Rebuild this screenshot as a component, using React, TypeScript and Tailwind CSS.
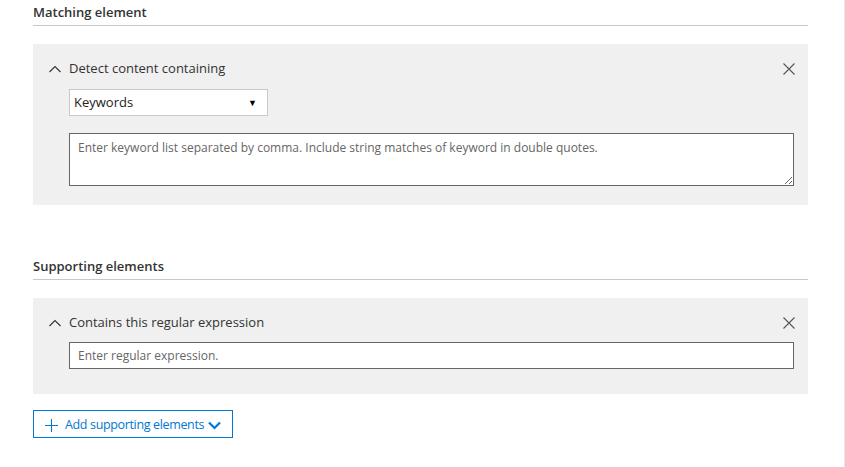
import React from "react";

function ChevronUp() {
  return (
    <svg width="12" height="8" viewBox="0 0 12 8" className="shrink-0">
      <path d="M0.5 7 L6 1.5 L11.5 7" fill="none" stroke="#333" strokeWidth="1.1" />
    </svg>
  );
}

function CloseIcon() {
  return (
    <svg width="12" height="12" viewBox="0 0 12 12" className="shrink-0">
      <path d="M0.5 0.5 L11.5 11.5 M11.5 0.5 L0.5 11.5" fill="none" stroke="#555" strokeWidth="1.1" />
    </svg>
  );
}

function SectionHeading({ title, className = "" }: { title: string; className?: string }) {
  return (
    <div className={"border-b border-[#c8c8c8] pb-[3px] pt-[2px] " + className}>
      <h2 className="h-5 text-[13px] font-semibold leading-5 text-[#333]">{title}</h2>
    </div>
  );
}

function PanelHeader({ label }: { label: string }) {
  return (
    <div className="flex h-5 items-center justify-between">
      <div className="flex items-center gap-2">
        <ChevronUp />
        <span className="text-[13px] text-[#333]">{label}</span>
      </div>
      <CloseIcon />
    </div>
  );
}

export default function App() {
  return (
    <div
      className="min-h-[467px] w-[845px] border-r border-[#e6e6e6] bg-white pl-[33px]"
      style={{ fontFamily: '"Segoe UI", "Open Sans", sans-serif' }}
    >
      <div className="w-[775px]">
        <SectionHeading title="Matching element" />

        {/* matching element panel */}
        <div className="mt-[18px] bg-[#f0f0f0] pb-[19px] pl-4 pr-[13px] pt-[15px]">
          <PanelHeader label="Detect content containing" />
          <div className="ml-5 mt-[10px] flex h-[27px] w-[199px] items-center justify-between border border-[#c8c8c8] bg-white pl-1 pr-[10px]">
            <span className="text-[13px] text-[#222]">Keywords</span>
            <span className="text-[9px] text-black">▼</span>
          </div>
          <textarea
            className="ml-5 mt-[17px] block h-[53px] w-[725px] border border-[#666] bg-white px-2 py-[5px] text-[12px] text-[#333] placeholder:text-[#666] outline-none"
            placeholder="Enter keyword list separated by comma. Include string matches of keyword in double quotes."
          />
        </div>

        <SectionHeading title="Supporting elements" className="mt-[49px]" />

        {/* supporting elements panel */}
        <div className="mt-[18px] bg-[#f0f0f0] pb-[25px] pl-4 pr-[13px] pt-[15px]">
          <PanelHeader label="Contains this regular expression" />
          <input
            className="ml-5 mt-[9px] block h-[27px] w-[725px] border border-[#666] bg-white px-2 text-[12px] text-[#333] placeholder:text-[#666] outline-none"
            placeholder="Enter regular expression."
          />
        </div>

        <button className="mt-4 flex h-7 w-[200px] items-center whitespace-nowrap border border-[#0078d4] bg-white pl-[11px] pt-[2px] text-[12.5px] tracking-[-0.35px] text-[#0078d4]">
          <svg width="13" height="13" viewBox="0 0 13 13" className="mr-[7px] shrink-0">
            <path d="M6.5 0 V13 M0 6.5 H13" fill="none" stroke="#0078d4" strokeWidth="1.1" />
          </svg>
          <span>Add supporting elements</span>
          <svg width="13" height="9" viewBox="0 0 13 9" className="ml-1 shrink-0">
            <path d="M1 1.5 L6.5 7 L12 1.5" fill="none" stroke="#0078d4" strokeWidth="2.2" />
          </svg>
        </button>
      </div>
    </div>
  );
}
